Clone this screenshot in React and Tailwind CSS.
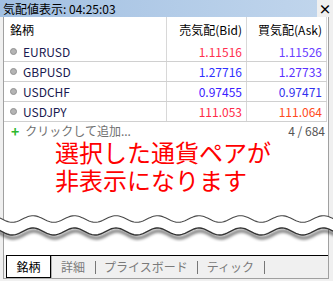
import React from 'react';

const rows = [
  { sym: 'EURUSD', bid: '1.11516', ask: '1.11526', bidC: 'text-[#ff3050]', askC: 'text-[#6a40ff]' },
  { sym: 'GBPUSD', bid: '1.27716', ask: '1.27733', bidC: 'text-[#3030ff]', askC: 'text-[#5a30ff]' },
  { sym: 'USDCHF', bid: '0.97455', ask: '0.97471', bidC: 'text-[#3a20ff]', askC: 'text-[#3030ee]' },
  { sym: 'USDJPY', bid: '111.053', ask: '111.064', bidC: 'text-[#ff2a48]', askC: 'text-[#ff4a20]' },
];

const W = 333;

function wavePts(y0, amp) {
  const pts = [];
  for (let x = -4; x <= W + 4; x += 1.5) {
    pts.push([x, y0 - amp * Math.cos((2 * Math.PI * (x - 33)) / 41.5)]);
  }
  return pts;
}

const toD = (pts) => pts.map((p, i) => (i ? 'L' : 'M') + p[0].toFixed(1) + ' ' + p[1].toFixed(2)).join(' ');

function WaveCut() {
  const w1 = wavePts(7, 3.3);
  const w2 = wavePts(19.5, 3.5);
  const cut = toD(w1) + ' ' + [...w2].reverse().map((p) => 'L' + p[0].toFixed(1) + ' ' + p[1].toFixed(2)).join(' ') + ' Z';
  return (
    <svg width={W} height="30" viewBox={`0 0 ${W} 30`} className="block">
      <defs>
        <filter id="sh" x="-10%" y="-100%" width="120%" height="300%">
          <feGaussianBlur stdDeviation="1.6" />
        </filter>
      </defs>
      <rect x="0" y="0" width={W} height="30" fill="#f0f0f0" />
      <rect x="3" y="0" width="326" height="30" fill="#ffffff" />
      <line x1="3.5" y1="0" x2="3.5" y2="30" stroke="#a0a0a0" />
      <line x1="328.5" y1="0" x2="328.5" y2="30" stroke="#a0a0a0" />
      <path d={toD(w2)} transform="translate(1 3)" fill="none" stroke="#000" strokeOpacity="0.55" strokeWidth="3" filter="url(#sh)" />
      <path d={cut} fill="#ffffff" />
      <path d={toD(w1)} fill="none" stroke="#4a4a4a" strokeWidth="1.1" />
      <path d={toD(w2)} fill="none" stroke="#333" strokeWidth="1.4" />
    </svg>
  );
}

export default function App() {
  return (
    <div
      className="w-[333px] h-[281px] bg-[#f0f0f0] overflow-hidden text-[12px] text-black"
      style={{ fontFamily: '"Noto Sans CJK JP", "Noto Sans", sans-serif' }}
    >
      {/* title bar */}
      <div className="flex h-[17px]">
        <div className="flex-1 flex items-center pl-[3px] bg-gradient-to-r from-[#a2c0e2] to-[#c0d5ec] leading-none">
          気配値表示: 04:25:03
        </div>
        <div className="w-[16px] flex items-center justify-center font-bold text-[13px] leading-none">×</div>
      </div>

      {/* upper panel */}
      <div className="ml-[3px] w-[326px] h-[195px] border-x border-[#a0a0a0] bg-white overflow-hidden">
        <div className="flex h-[25px]">
          <div className="w-[163px] border-r border-[#d8d8d8] pl-[6px] flex items-center">銘柄</div>
          <div className="w-[80px] border-r border-[#d8d8d8] pr-[4px] flex items-center justify-end">売気配(Bid)</div>
          <div className="w-[80px] border-r border-[#d8d8d8] pr-[4px] flex items-center justify-end">買気配(Ask)</div>
        </div>
        {rows.map((r) => (
          <div key={r.sym} className="flex h-[20px] border-b border-[#d0d0d0] w-[323px]">
            <div className="w-[163px] border-r border-[#d8d8d8] pl-[6px] flex items-center">
              <span className="w-[7px] h-[7px] rounded-full bg-[#b4b4b4] border border-[#909090] mr-[6px]"></span>
              <span className="text-[#1a1a50]">{r.sym}</span>
            </div>
            <div className={`w-[80px] border-r border-[#d8d8d8] pr-[4px] flex items-center justify-end ${r.bidC}`}>{r.bid}</div>
            <div className={`w-[80px] border-r border-[#d8d8d8] pr-[4px] flex items-center justify-end ${r.askC}`}>{r.ask}</div>
          </div>
        ))}
        <div className="flex h-[18px] items-center pl-[7px] pr-[3px] text-[#707070]">
          <span className="text-[#2db82d] font-bold text-[14px] leading-none mr-[6px]">+</span>
          <span className="flex-1">クリックして追加...</span>
          <span className="text-[#555]">4 / 684</span>
        </div>
        <div className="pl-[51px] mt-[-2px] text-[24px] leading-[28px] text-[#ff0000]">
          <div>選択した通貨ペアが</div>
          <div>非表示になります</div>
        </div>
      </div>

      <WaveCut />

      {/* lower panel with tabs */}
      <div className="ml-[3px] w-[326px] h-[37px] border-x border-b border-[#a0a0a0] flex flex-col">
        <div className="h-[13px] bg-white"></div>
        <div className="flex h-[23px]">
          <div className="ml-[2px] w-[45px] h-[23px] bg-white border border-black shadow-[1px_1px_0_#b0b0b0] flex items-center justify-center text-black">
            銘柄
          </div>
          <div className="flex-1 border-t border-black flex items-center text-[#7a7a7a]">
            <span className="ml-[10px]">詳細</span>
            <span className="ml-[10px] w-px h-[13px] bg-[#777]"></span>
            <span className="ml-[8px]">プライスボード</span>
            <span className="ml-[9px] w-px h-[13px] bg-[#777]"></span>
            <span className="ml-[9px]">ティック</span>
            <span className="ml-[10px] w-px h-[13px] bg-[#777]"></span>
          </div>
        </div>
      </div>
    </div>
  );
}
